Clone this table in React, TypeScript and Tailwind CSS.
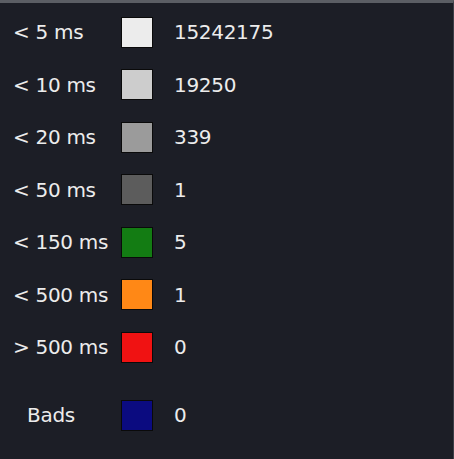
const rows = [
  { label: '< 5 ms', color: 'bg-[#ececec]', value: '15242175' },
  { label: '< 10 ms', color: 'bg-[#cdcdcd]', value: '19250' },
  { label: '< 20 ms', color: 'bg-[#9b9b9b]', value: '339' },
  { label: '< 50 ms', color: 'bg-[#5c5c5c]', value: '1' },
  { label: '< 150 ms', color: 'bg-[#137c13]', value: '5' },
  { label: '< 500 ms', color: 'bg-[#ff8816]', value: '1' },
  { label: '> 500 ms', color: 'bg-[#f01212]', value: '0' },
];

function Row({ label, color, value, indent }: { label: string; color: string; value: string; indent?: boolean }) {
  return (
    <div className="grid grid-cols-[108px_53px_1fr] items-center h-[52.5px]">
      <span className={indent ? 'pl-[14px]' : ''}>{label}</span>
      <div className={`w-[32px] h-[31px] border border-[#0a0a0a] ${color}`} />
      <span>{value}</span>
    </div>
  );
}

export default function App() {
  return (
    <div
      className="w-[454px] h-[459px] bg-[#1c1e26] border-t-[3px] border-t-[#5b5e64] border-r border-r-[#3c3f47] pt-[3px] pl-[13px] text-[#ececec] text-[20px] tracking-[-0.3px] overflow-hidden"
      style={{ fontFamily: '"DejaVu Sans", Verdana, sans-serif' }}
    >
      {rows.map((r) => (
        <Row key={r.label} {...r} />
      ))}
      <div className="mt-[15.5px]">
        <Row label="Bads" color="bg-[#0b0b80]" value="0" indent />
      </div>
    </div>
  );
}
